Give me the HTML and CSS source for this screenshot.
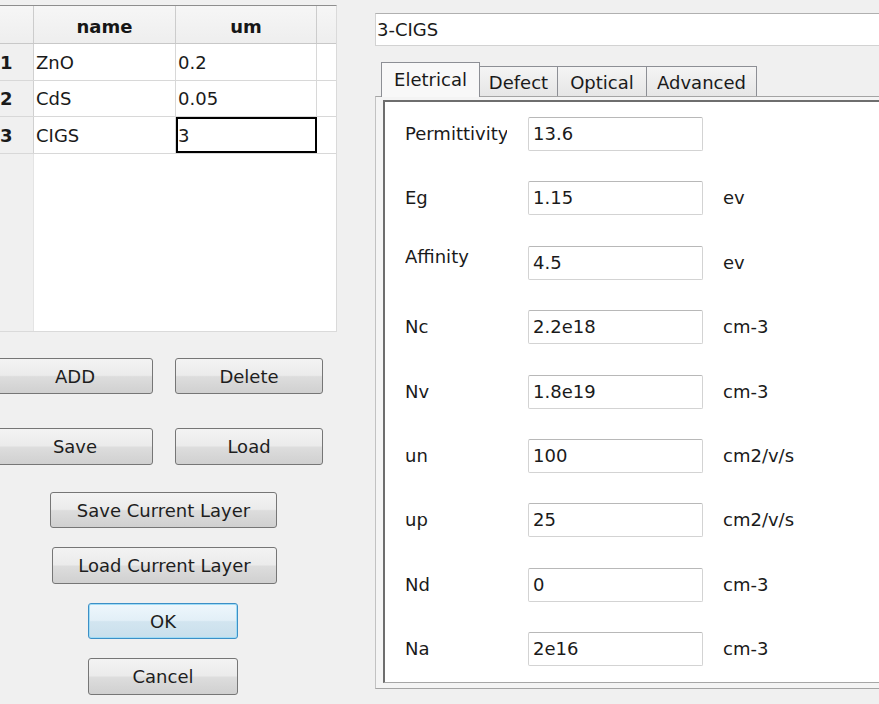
FILE: index.html
```html
<!DOCTYPE html>
<html lang="en">
<head>
<meta charset="utf-8">
<title>Layer Editor</title>
<link rel="stylesheet" href="styles.css">
</head>
<body>
<div class="window">
  <section class="layers">
    <div class="grid">
      <div class="grid-head">
        <div class="corner"></div>
        <div class="hcell">name</div>
        <div class="hcell">um</div>
        <div class="hfill"></div>
      </div>
      <div class="grid-row r1">
        <div class="rh">1</div>
        <div class="cell">ZnO</div>
        <div class="cell">0.2</div>
        <div class="fill"></div>
      </div>
      <div class="grid-row r2">
        <div class="rh">2</div>
        <div class="cell">CdS</div>
        <div class="cell">0.05</div>
        <div class="fill"></div>
      </div>
      <div class="grid-row r3">
        <div class="rh">3</div>
        <div class="cell">CIGS</div>
        <div class="cell current">3</div>
        <div class="fill"></div>
      </div>
      <div class="grid-rest">
        <div class="rh-empty"></div>
        <div class="empty"></div>
      </div>
    </div>

    <div class="pair pair-top">
      <button class="btn wide">ADD</button>
      <button class="btn narrow">Delete</button>
    </div>
    <div class="pair pair-file">
      <button class="btn wide">Save</button>
      <button class="btn narrow">Load</button>
    </div>
    <button class="btn layer-save">Save Current Layer</button>
    <button class="btn layer-load">Load Current Layer</button>
    <button class="btn ok">OK</button>
    <button class="btn cancel">Cancel</button>
  </section>

  <section class="props">
    <div class="name-edit">3-CIGS</div>
    <div class="tabs">
      <div class="tab active t-el">Eletrical</div>
      <div class="tab t-de">Defect</div>
      <div class="tab t-op">Optical</div>
      <div class="tab t-ad">Advanced</div>
    </div>
    <div class="pane">
      <div class="page">
        <div class="form">
          <div class="lbl">Permittivity</div><div class="edit">13.6</div><div class="unit"></div>
          <div class="lbl">Eg</div><div class="edit">1.15</div><div class="unit">ev</div>
          <div class="lbl raise">Affinity</div><div class="edit">4.5</div><div class="unit">ev</div>
          <div class="lbl">Nc</div><div class="edit">2.2e18</div><div class="unit">cm-3</div>
          <div class="lbl">Nv</div><div class="edit">1.8e19</div><div class="unit">cm-3</div>
          <div class="lbl">un</div><div class="edit">100</div><div class="unit">cm2/v/s</div>
          <div class="lbl">up</div><div class="edit">25</div><div class="unit">cm2/v/s</div>
          <div class="lbl">Nd</div><div class="edit">0</div><div class="unit">cm-3</div>
          <div class="lbl">Na</div><div class="edit">2e16</div><div class="unit">cm-3</div>
        </div>
      </div>
    </div>
  </section>
</div>
</body>
</html>
```

FILE: styles.css
```css
html, body {
  margin: 0;
  padding: 0;
}

body {
  width: 879px;
  height: 704px;
  overflow: hidden;
  background: #f0f0f0;
  font-family: "DejaVu Sans", Verdana, sans-serif;
  font-size: 18px;
  color: #1a1a1a;
}

.window {
  display: flex;
  align-items: flex-start;
}

/* ---------- left column: layer table and buttons ---------- */

.layers {
  flex: none;
  width: 340px;
  margin-left: -3px;
  padding-top: 5px;
  display: flex;
  flex-direction: column;
  align-items: flex-start;
}

.grid {
  width: 340px;
  height: 327px;
  box-sizing: border-box;
  border-top: 1px solid #8e8e8e;
  border-right: 1px solid #dadada;
  border-bottom: 1px solid #dadada;
  background: #fff;
  display: flex;
  flex-direction: column;
}

.grid-head,
.grid-row {
  display: grid;
  grid-template-columns: 37px 142px 141px 1fr;
}

.grid-head {
  height: 38px;
  box-sizing: border-box;
  border-bottom: 1px solid #c8c8c8;
  background: linear-gradient(#f6f6f6, #eeeeee);
}

.corner,
.hcell {
  border-right: 1px solid #cccccc;
}

.hcell {
  display: flex;
  align-items: center;
  justify-content: center;
  font-weight: bold;
  padding-top: 3px;
  color: #161616;
}

.grid-row {
  box-sizing: border-box;
  border-bottom: 1px solid #d8d8d8;
}

.r1 { height: 37px; }
.r2 { height: 36px; }
.r3 { height: 37px; }

.rh {
  background: #f0f0f0;
  border-right: 1px solid #d0d0d0;
  font-weight: bold;
  display: flex;
  align-items: center;
  padding-left: 3px;
}

.cell {
  box-sizing: border-box;
  border-right: 1px solid #d8d8d8;
  display: flex;
  align-items: center;
  padding-left: 2px;
  white-space: nowrap;
}

.cell.current {
  outline: 2px solid #000;
  outline-offset: -2px;
}

.fill {
  background: #fff;
}

.grid-rest {
  flex: 1;
  display: grid;
  grid-template-columns: 37px 1fr;
}

.rh-empty {
  background: #f0f0f0;
  border-right: 1px solid #e4e4e4;
}

.empty {
  background: #fff;
}

/* push buttons */

.btn {
  font: inherit;
  color: #1e1e1e;
  height: 36px;
  padding: 0;
  box-sizing: border-box;
  border: 1px solid #767676;
  border-radius: 3px;
  background: linear-gradient(#f3f3f3 0%, #ebebeb 48%, #dddddd 52%, #d0d0d0 100%);
  text-align: center;
  flex: none;
}

.pair {
  display: flex;
}

.pair-top { margin-top: 26px; }
.pair-file { margin-top: 34px; }
.pair-file .btn { height: 37px; }

.btn.wide { width: 156px; }
.btn.narrow { width: 148px; margin-left: 22px; }

.layer-save {
  margin-top: 27px;
  margin-left: 53px;
  width: 227px;
}

.layer-load {
  margin-top: 19px;
  margin-left: 55px;
  width: 225px;
  height: 37px;
}

.ok {
  margin-top: 19px;
  margin-left: 91px;
  width: 150px;
  border-color: #3c8fc6;
  box-shadow: inset 0 0 0 1px #9fdcf6;
  background: linear-gradient(#eef7fc 0%, #e2eff7 48%, #d2e5f0 52%, #c9dfec 100%);
}

.cancel {
  margin-top: 19px;
  margin-left: 91px;
  width: 150px;
  height: 37px;
}

/* ---------- right column: layer properties ---------- */

.props {
  flex: none;
  width: 520px;
  margin-left: 38px;
  padding-top: 13px;
}

.name-edit {
  height: 33px;
  box-sizing: border-box;
  border: 1px solid #d2d2d2;
  border-top-color: #b0b0b0;
  background: #fff;
  padding-left: 1px;
  line-height: 31px;
  white-space: nowrap;
}

.tabs {
  margin-top: 16px;
  height: 35px;
  display: flex;
  align-items: flex-start;
  padding-left: 6px;
  position: relative;
  z-index: 1;
}

.tab {
  box-sizing: border-box;
  height: 30px;
  margin-top: 4px;
  margin-left: -1px;
  border: 1px solid #8d8f95;
  border-bottom: none;
  background: linear-gradient(#f4f4f4, #e6e6e6);
  display: flex;
  align-items: center;
  justify-content: center;
  padding-top: 2px;
  white-space: nowrap;
}

.tab.active {
  height: 35px;
  margin-top: 0;
  margin-left: 0;
  background: #f8f8f8;
  padding-top: 0;
  padding-bottom: 2px;
  position: relative;
  z-index: 2;
}

.t-el { width: 99px; }
.t-de { width: 79px; }
.t-op { width: 90px; }
.t-ad { width: 111px; }

.pane {
  margin-top: -1px;
  height: 593px;
  box-sizing: border-box;
  border: 1px solid #a4a4a4;
  border-left-color: #c2c2c2;
  border-right: none;
  background: #f4f4f4;
  padding: 3px 0 5px 7px;
}

.page {
  height: 583px;
  box-sizing: border-box;
  border-top: 2px solid #6e6e6e;
  border-left: 2px solid #6e6e6e;
  border-bottom: 1px solid #a6a6a6;
  background: #fff;
  padding: 15px 0 0 20px;
}

.form {
  display: grid;
  grid-template-columns: 123px 195px auto;
  grid-template-rows: repeat(9, 34px);
  row-gap: 30.375px;
  align-items: center;
}

/* label cells have a fixed width, so long captions get clipped */
.lbl {
  width: 102px;
  overflow: hidden;
  white-space: nowrap;
  line-height: 22px;
}

.lbl.raise {
  align-self: start;
  margin-top: 0;
}

.edit {
  width: 175px;
  height: 34px;
  box-sizing: border-box;
  border: 1px solid #d3d3d3;
  border-top-color: #b8b8b8;
  border-radius: 2px;
  background: #fff;
  padding-left: 4px;
  line-height: 31px;
  white-space: nowrap;
}

.unit {
  white-space: nowrap;
  line-height: 22px;
}
```
